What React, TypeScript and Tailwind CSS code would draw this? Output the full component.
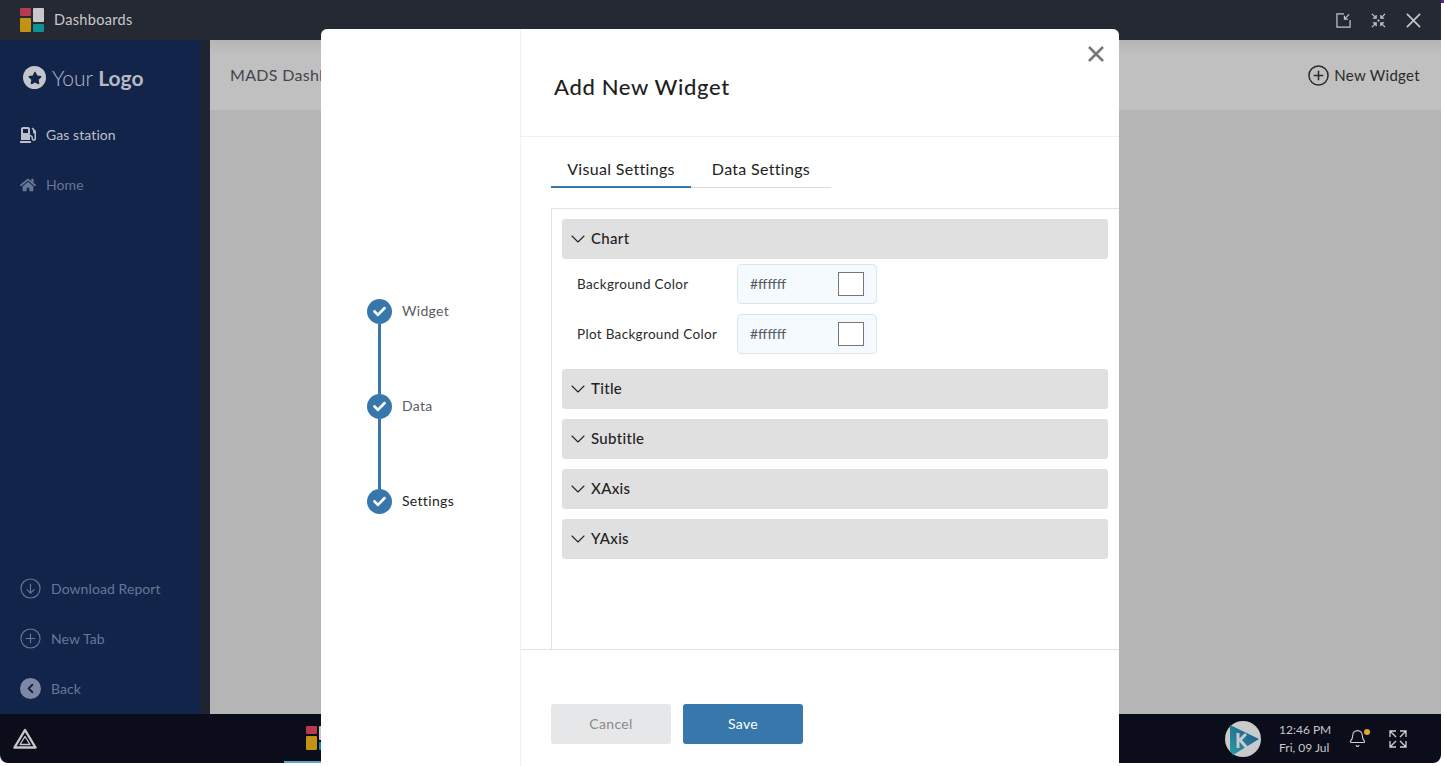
import { Bell, ChevronDown, ChevronLeft } from 'lucide-react';
import { FaCheck, FaGasPump, FaHome, FaStar } from 'react-icons/fa';

const font = "font-['Lato','Noto_Sans',sans-serif]";

function AppLogo({ className }: { className: string }) {
  return (
    <svg viewBox="0 0 24 24" className={className}>
      <rect x="0" y="0" width="11" height="8" rx="1" fill="#b73a4f" />
      <rect x="0" y="10" width="11" height="14" rx="1" fill="#c29215" />
      <rect x="13" y="0" width="11" height="14" rx="1" fill="#c9c9c9" />
      <rect x="13" y="16" width="11" height="8" rx="1" fill="#0f9295" />
    </svg>
  );
}

function TitleBarIcons() {
  return (
    <div className="flex items-center gap-5 text-[#c4c6c9]">
      <svg viewBox="0 0 16 16" className="h-[15px] w-[15px]" fill="none" stroke="currentColor" strokeWidth="1.3">
        <path d="M8.5 1H1v14h14V7.5" />
        <path d="M14 1.5 9 6.5M9 2.8v3.7h3.7" />
      </svg>
      <svg viewBox="0 0 16 16" className="h-[15px] w-[15px]" fill="none" stroke="currentColor" strokeWidth="1.3">
        <path d="M1 1l4 4M5.5 2v3.5H2M15 1l-4 4M10.5 2v3.5H14M1 15l4-4M5.5 14v-3.5H2M15 15l-4-4M10.5 14v-3.5H14" />
        <circle cx="8" cy="8" r="1.2" fill="currentColor" stroke="none" />
      </svg>
      <svg viewBox="0 0 16 16" className="h-[15px] w-[15px]" fill="none" stroke="currentColor" strokeWidth="1.8">
        <path d="M1 1l14 14M15 1 1 15" />
      </svg>
    </div>
  );
}

function CircleIcon({ kind, weight = 1.2 }: { kind: 'down' | 'plus'; weight?: number }) {
  return (
    <svg viewBox="0 0 22 22" className="h-[21px] w-[21px]" fill="none" stroke="currentColor" strokeWidth={weight}>
      <circle cx="11" cy="11" r="10" />
      {kind === 'down' ? <path d="M11 6v10M7 12l4 4 4-4" /> : <path d="M11 6v10M6 11h10" />}
    </svg>
  );
}

function Sidebar() {
  return (
    <aside className="flex w-[200px] flex-col bg-[#12244a] pb-[15px] tracking-[0.005em] text-[#687696]">
      <div className="flex h-[76px] items-center pb-[1px] pl-[23px] text-[#b5b9c1]">
        <span className="flex h-[23px] w-[23px] items-center justify-center rounded-full bg-[#c4c6cb] text-[#12244a]">
          <FaStar className="h-[14px] w-[14px]" />
        </span>
        <span className="ml-[6px] text-[21px] font-light tracking-normal">
          Your <b className="font-bold">Logo</b>
        </span>
      </div>
      <div className="flex h-[38px] items-center gap-[10px] pl-5 text-sm text-[#bcc0c8]">
        <FaGasPump className="h-4 w-4" />
        Gas station
      </div>
      <div className="mt-3 flex h-[38px] items-center gap-[10px] pl-5 text-sm">
        <FaHome className="h-4 w-4" />
        Home
      </div>
      <div className="mt-auto flex flex-col gap-[29px] pl-5 text-sm">
        <div className="flex items-center gap-[10px]">
          <CircleIcon kind="down" />
          Download Report
        </div>
        <div className="flex items-center gap-[10px]">
          <CircleIcon kind="plus" />
          New Tab
        </div>
        <div className="flex items-center gap-[10px]">
          <span className="flex h-[21px] w-[21px] items-center justify-center rounded-full bg-[#7d88a6] text-[#12244a]">
            <ChevronLeft className="h-[15px] w-[15px]" strokeWidth={3} />
          </span>
          Back
        </div>
      </div>
    </aside>
  );
}

function Taskbar() {
  return (
    <footer className="flex h-[49px] items-center rounded-b-lg bg-[#0b0e1a] pl-[13px] pr-[34px]">
      <svg viewBox="0 0 24 21" className="h-[21px] w-6" fill="none" stroke="#c9c9c9" strokeLinejoin="round">
        <path d="M12 2 22.5 19.5H1.5Z" strokeWidth="2.4" />
        <path d="M12 8.5 17 16.5H7Z" strokeWidth="1.3" />
      </svg>
      <div className="ml-[247px] flex h-full w-[80px] items-center self-stretch border-b-2 border-[#5aa6c9] pl-[22px]">
        <AppLogo className="h-6 w-6" />
      </div>
      <div className="ml-auto flex items-center">
        <svg viewBox="0 0 36 36" className="h-9 w-9">
          <defs>
            <linearGradient id="tb" x1="0" y1="1" x2="1" y2="0">
              <stop offset="0" stopColor="#2c9ca6" />
              <stop offset="1" stopColor="#1c4f86" />
            </linearGradient>
          </defs>
          <circle cx="18" cy="18" r="18" fill="#c9cacc" />
          <path d="M5 4 34 18 8 34 5 30Z" fill="url(#tb)" />
          <path d="M13 12v15M14 20l7-7M15 19l7 8" stroke="#c9cacc" strokeWidth="3" fill="none" />
        </svg>
        <div className="ml-[18px] w-[58px] text-xs leading-[18px] tracking-normal text-[#c4c6c9]">
          <div>12:46 PM</div>
          <div>Fri, 09 Jul</div>
        </div>
        <div className="relative ml-[11px] text-[#d0d1d3]">
          <Bell className="h-[19px] w-[19px]" strokeWidth={1.4} />
          <span className="absolute -right-[3px] top-0 h-[6px] w-[6px] rounded-full bg-[#e0a82e]" />
        </div>
        <svg viewBox="0 0 18 18" className="ml-[22px] h-[18px] w-[18px]" fill="none" stroke="#d0d1d3" strokeWidth="1.3">
          <path d="M1 7V1h6M1 1l6 6M17 7V1h-6M17 1l-6 6M1 11v6h6M1 17l6-6M17 11v6h-6M17 17l-6-6" />
        </svg>
      </div>
    </footer>
  );
}

function Step({ label, active, last }: { label: string; active?: boolean; last?: boolean }) {
  return (
    <div className={`flex gap-[10px] ${last ? '' : 'h-[95px]'}`}>
      <div className="flex w-[25px] flex-col items-center">
        <span className="flex h-[25px] w-[25px] shrink-0 items-center justify-center rounded-full bg-[#3777ab] text-white">
          <FaCheck className="h-[13px] w-[13px]" />
        </span>
        {!last && <span className="w-[3px] flex-1 bg-[#3777ab]" />}
      </div>
      <span className={`text-sm leading-[24px] ${active ? 'text-[#222222]' : 'text-[#5b5c64]'}`}>{label}</span>
    </div>
  );
}

function Section({ title }: { title: string }) {
  return (
    <div className="flex h-10 items-center gap-px rounded-[3px] bg-[#e0e0e0] pb-px pl-[4px] text-[15px] font-medium text-[#222222]">
      <ChevronDown className="h-6 w-6" strokeWidth={1.1} />
      {title}
    </div>
  );
}

function ColorField({ label }: { label: string }) {
  return (
    <div className="flex h-10 items-center text-[#2b2b2b]">
      <span className="w-[175px] pl-[15px] text-[13.5px]">{label}</span>
      <div className="flex h-10 w-[140px] items-center justify-between rounded border border-[#dfe4e8] bg-[#f4fafd] pl-3 pr-3">
        <span className="text-sm tracking-normal text-[#55585c]">#ffffff</span>
        <span className="h-6 w-[26px] border border-[#777777] bg-white" />
      </div>
    </div>
  );
}

function WidgetModal() {
  return (
    <div className="absolute left-[321px] top-[29px] flex h-[737px] w-[798px] rounded-t-md bg-white">
      <div className="w-[200px] border-r border-[#f0f0f2] pl-[46px] pt-[270px]">
        <Step label="Widget" />
        <Step label="Data" />
        <Step label="Settings" active last />
      </div>
      <div className="relative flex flex-1 flex-col">
        <svg viewBox="0 0 16 16" className="absolute right-[15px] top-[17px] h-4 w-4" fill="none" stroke="#777777" strokeWidth="2.6">
          <path d="M1 1l14 14M15 1 1 15" />
        </svg>
        <div className="flex h-[108px] items-center border-b border-[#f0f0f2] pl-[33px] pt-[8px] text-[22px] font-medium tracking-[0.03em] text-[#1f1f1f]">
          Add New Widget
        </div>
        <div className="ml-[30px] mt-[16px] flex h-[35px] w-[280px] border-b border-[#dcdcdc] text-base text-[#222222]">
          <div className="-mb-px w-[140px] border-b-2 border-[#3777ab] pt-[4px] text-center">Visual Settings</div>
          <div className="w-[140px] pt-[4px] text-center">Data Settings</div>
        </div>
        <div className="ml-[30px] mt-5 flex h-[441px] flex-col border-l border-t border-[#e2e2e2] pl-[10px] pr-[11px] pt-[10px]">
          <Section title="Chart" />
          <div className="mt-[5px]">
            <ColorField label="Background Color" />
          </div>
          <div className="mt-[10px]">
            <ColorField label="Plot Background Color" />
          </div>
          <div className="mt-[15px] flex flex-col gap-[10px]">
            <Section title="Title" />
            <Section title="Subtitle" />
            <Section title="XAxis" />
            <Section title="YAxis" />
          </div>
        </div>
        <div className="flex flex-1 gap-3 border-t border-[#e2e2e2] pl-[30px] pt-[54px] text-sm">
          <div className="flex h-10 w-[120px] items-center justify-center rounded-[3px] bg-[#e6e7e9] text-[#8a8a8a]">Cancel</div>
          <div className="flex h-10 w-[120px] items-center justify-center rounded-[3px] bg-[#3777ab] text-white">Save</div>
        </div>
      </div>
    </div>
  );
}

export default function App() {
  return (
    <div className={`relative h-[766px] w-[1444px] overflow-hidden bg-white tracking-[0.02em] ${font}`}>
      <div className="flex h-[763px] w-[1441px] flex-col">
        <header className="flex h-10 items-center justify-between bg-[#252933] pl-5 pr-[20px]">
          <div className="flex items-center gap-[10px] text-[14.5px] text-[#c9cacc]">
            <AppLogo className="h-6 w-6" />
            Dashboards
          </div>
          <TitleBarIcons />
        </header>
        <div className="flex min-h-0 flex-1">
          <Sidebar />
          <div className="w-[10px] bg-[#1f2433]" />
          <main className="flex-1 bg-[#b5b5b5]">
            <div className="flex h-[70px] items-center justify-between bg-gradient-to-b from-[#b4b4b4] to-[#c0c0c0] to-20% pl-5 pr-[21px]">
              <span className="text-base text-[#42464d]">MADS Dashboard</span>
              <div className="flex items-center gap-[5px] text-[15px] text-[#2a2a2a]">
                <CircleIcon kind="plus" weight={1.6} />
                New Widget
              </div>
            </div>
          </main>
        </div>
        <Taskbar />
      </div>
      <span className="absolute right-0 top-0 h-[3px] w-[3px] bg-[#5b2d8e]" />
      <WidgetModal />
    </div>
  );
}
